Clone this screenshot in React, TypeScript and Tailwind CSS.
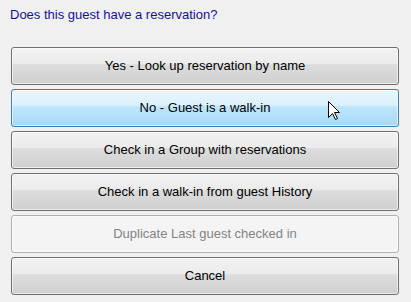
const buttons = [
  { label: 'Yes - Look up reservation by name', state: 'normal' },
  { label: 'No - Guest is a walk-in', state: 'hover' },
  { label: 'Check in a Group with reservations', state: 'normal' },
  { label: 'Check in a walk-in from guest History', state: 'normal' },
  { label: 'Duplicate Last guest checked in', state: 'disabled' },
  { label: 'Cancel', state: 'normal' },
];

const styles: Record<string, string> = {
  normal:
    'border-[#707070] text-black bg-[linear-gradient(#f2f2f2_0%,#ebebeb_45%,#dddddd_46%,#cfcfcf_100%)]',
  hover:
    'border-[#3c7fb1] text-black bg-[linear-gradient(#eaf6fd_0%,#d9f0fc_45%,#bee6fd_46%,#a7d9f5_100%)]',
  disabled: 'border-[#adb2b5] text-[#838383] bg-[#f4f4f4]',
};

const Cursor = () => (
  <svg
    className="absolute left-[328px] top-[101px]"
    width="13"
    height="20"
    viewBox="0 0 13 20"
  >
    <path
      d="M0.5 0.5 L0.5 16.5 L4.5 12.5 L7.5 18.5 L9.5 17.5 L6.5 11.5 L11.5 11.5 Z"
      fill="#fff"
      stroke="#000"
      strokeWidth="1"
      strokeLinejoin="miter"
    />
  </svg>
);

export default function App() {
  return (
    <div className="relative w-[411px] h-[302px] bg-[#f0f0f0] font-['Liberation_Sans',Arial,sans-serif] text-[13px]">
      <div className="px-[10px] pt-[7px] text-[#14109c] leading-[15px]">
        Does this guest have a reservation?
      </div>
      <div className="flex flex-col gap-[4px] pl-[11px] pr-[12px] pt-[25px]">
        {buttons.map((b) => (
          <div
            key={b.label}
            className={`h-[38px] rounded-[3px] border flex items-center justify-center shadow-[inset_0_0_0_1px_rgba(255,255,255,0.6)] ${styles[b.state]}`}
          >
            {b.label}
          </div>
        ))}
      </div>
      <Cursor />
    </div>
  );
}
